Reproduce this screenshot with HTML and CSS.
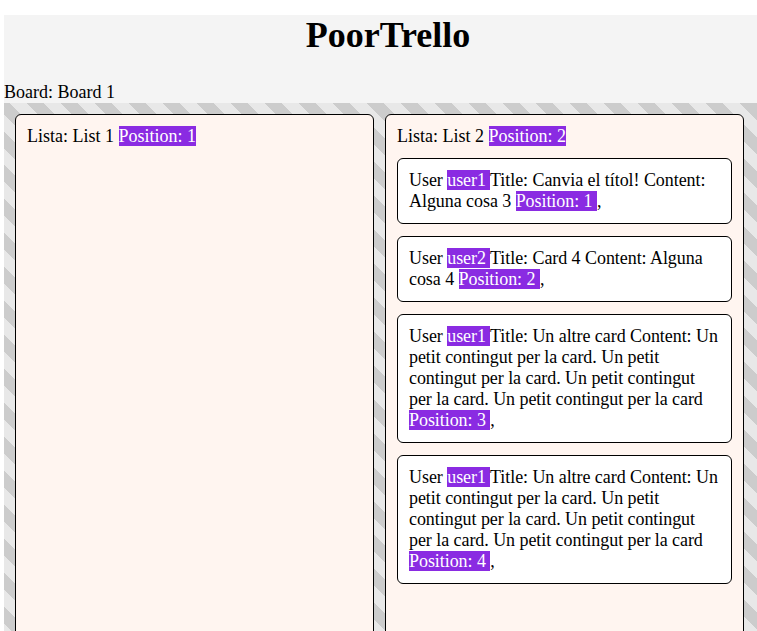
FILE: index.html
```html
<!DOCTYPE html>
<html>
<head>
<meta charset="utf-8">
<title>PoorTrello</title>
<link rel="stylesheet" href="styles.css">
</head>
<body>
<div class="app">
  <header class="top">
    <h1 class="title">PoorTrello</h1>
    <div class="board-name">Board: Board 1</div>
  </header>
  <main class="board">
    <section class="list">
      <div class="list-title">Lista: List 1 <span class="tag">Position: 1</span></div>
    </section>
    <section class="list">
      <div class="list-title">Lista: List 2 <span class="tag">Position: 2</span></div>
      <div class="card">User <span class="tag">user1 </span> Title: Canvia el títol! Content: Alguna cosa 3 <span class="tag">Position: 1 </span>,</div>
      <div class="card">User <span class="tag">user2 </span> Title: Card 4 Content: Alguna cosa 4 <span class="tag">Position: 2 </span>,</div>
      <div class="card">User <span class="tag">user1 </span> Title: Un altre card Content: Un petit contingut per la card. Un petit contingut per la card. Un petit contingut per la card. Un petit contingut per la card <span class="tag">Position: 3 </span>,</div>
      <div class="card">User <span class="tag">user1 </span> Title: Un altre card Content: Un petit contingut per la card. Un petit contingut per la card. Un petit contingut per la card. Un petit contingut per la card <span class="tag">Position: 4 </span>,</div>
    </section>
  </main>
</div>
</body>
</html>
```
FILE: styles.css
```css
html, body {
  margin: 0;
  padding: 0;
  overflow: hidden;
}
body {
  font-family: "Liberation Serif", "Times New Roman", serif;
  font-size: 18px;
  color: #000;
  background: #fff;
}
.app {
  padding: 15px 0 0 4px;
}
.top {
  background: #f4f4f4;
}
.title {
  margin: 0;
  padding: 0 0 26px 15px;
  font-size: 36px;
  line-height: 41px;
  text-align: center;
  font-weight: bold;
}
.board-name {
  line-height: 21px;
}
.board {
  display: flex;
  gap: 11px;
  padding: 11px;
  height: 600px;
  background: repeating-linear-gradient(45deg, #cccccc 0, #cccccc 12px, #e8e8e8 12px, #e8e8e8 24px);
}
.list {
  flex: 0 0 359px;
  box-sizing: border-box;
  width: 359px;
  border: 1px solid #000;
  border-radius: 6px;
  background: #fff5f0;
  padding: 11px;
  line-height: 21px;
}
.list-title {
  margin-bottom: 11px;
}
.tag {
  background: #8a2be2;
  color: #fff;
}
.card {
  background: #fff;
  border: 1px solid #000;
  border-radius: 6px;
  padding: 11px;
  margin-bottom: 12px;
  line-height: 21px;
  letter-spacing: -0.06px;
}
```
